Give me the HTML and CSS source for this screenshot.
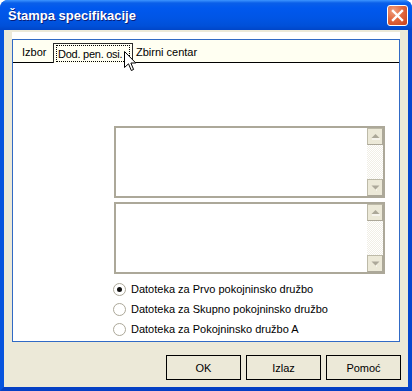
FILE: index.html
```html
<!DOCTYPE html>
<html>
<head>
<meta charset="utf-8">
<link rel="stylesheet" href="styles.css">
</head>
<body>
<div class="window">
  <div class="titlebar">
    <span class="title">Štampa specifikacije</span>
    <span class="close">
      <svg width="13" height="13" viewBox="0 0 13 13"><path d="M2 2 L11 11 M11 2 L2 11" stroke="#fff" stroke-width="2.4" stroke-linecap="square"/></svg>
    </span>
  </div>
  <div class="client">
    <div class="strip"></div>
    <div class="tabctl">
      <div class="tabstrip">
        <span class="tab first">Izbor</span>
        <span class="tab active"><span class="focus">Dod. pen. osi.</span></span>
        <span class="tab last">Zbirni centar</span>
      </div>
      <div class="tabbody">
        <div class="listbox">
          <div class="lb-area"></div>
          <div class="sb">
            <span class="sb-btn"><svg width="9" height="6" viewBox="0 0 9 6"><path d="M4.5 0 L8.5 4 L0.5 4 Z" fill="#ACA899"/><rect x="1" y="4.5" width="8" height="1" fill="#fff"/></svg></span>
            <span class="sb-track"></span>
            <span class="sb-btn"><svg width="9" height="6" viewBox="0 0 9 6"><path d="M0.5 0.5 L8.5 0.5 L4.5 4.5 Z" fill="#ACA899"/><rect x="5" y="4.5" width="1" height="1" fill="#fff"/></svg></span>
          </div>
        </div>
        <div class="listbox">
          <div class="lb-area"></div>
          <div class="sb">
            <span class="sb-btn"><svg width="9" height="6" viewBox="0 0 9 6"><path d="M4.5 0 L8.5 4 L0.5 4 Z" fill="#ACA899"/><rect x="1" y="4.5" width="8" height="1" fill="#fff"/></svg></span>
            <span class="sb-track"></span>
            <span class="sb-btn"><svg width="9" height="6" viewBox="0 0 9 6"><path d="M0.5 0.5 L8.5 0.5 L4.5 4.5 Z" fill="#ACA899"/><rect x="5" y="4.5" width="1" height="1" fill="#fff"/></svg></span>
          </div>
        </div>
        <div class="radios">
          <label class="radio"><span class="circle checked"></span>Datoteka za Prvo pokojninsko družbo</label>
          <label class="radio"><span class="circle"></span>Datoteka za Skupno pokojninsko družbo</label>
          <label class="radio"><span class="circle"></span>Datoteka za Pokojninsko družbo A</label>
        </div>
      </div>
    </div>
    <div class="buttons">
      <span class="btn">OK</span>
      <span class="btn">Izlaz</span>
      <span class="btn">Pomoć</span>
    </div>
  </div>
  <svg class="cursor" width="13" height="21" viewBox="0 0 13 21">
    <path d="M0.5 0.5 L0.5 16.5 L4.5 12.8 L7.3 19.5 L9.6 18.5 L6.9 12 L11.8 12 Z" fill="#fff" stroke="#000" stroke-width="1" stroke-linejoin="miter"/>
  </svg>
</div>
</body>
</html>
```
FILE: styles.css
```css
* { box-sizing: border-box; }
html, body { margin: 0; padding: 0; background: #ffffff; }
body {
  font-family: "Liberation Sans", Arial, sans-serif;
  font-size: 11px;
  color: #000;
}
.window {
  position: relative;
  width: 412px;
  height: 391px;
  display: flex;
  flex-direction: column;
  border-radius: 8px 8px 0 0;
  overflow: hidden;
  background: #0058e6;
}
.titlebar {
  height: 30px;
  flex: none;
  display: flex;
  align-items: center;
  justify-content: space-between;
  padding: 0 4px 0 8px;
  background: linear-gradient(to bottom, #3d95ff 0px, #0a5fe9 3px, #0058ee 8px, #0055e5 18px, #0050d8 26px, #0046c8 30px);
}
.title {
  color: #fff;
  font-family: "Liberation Sans", Arial, sans-serif;
  font-weight: bold;
  font-size: 13px;
  text-shadow: 1px 1px 0 #0a1e7a;
  padding-top: 1px;
}
.close {
  width: 21px;
  height: 21px;
  border: 1px solid #fff;
  border-radius: 3px;
  background: radial-gradient(circle at 30% 25%, #f0a080 0%, #e2693f 45%, #c7401a 100%);
  display: flex;
  align-items: center;
  justify-content: center;
  margin-top: 1px;
}
.client {
  flex: 1;
  background: #ece9d8;
  border-left: 4px solid #0754de;
  border-right: 4px solid #0546cf;
  border-bottom: 4px solid #0540c4;
  padding: 2px 7px 0 8px;
  display: flex;
  flex-direction: column;
}
.strip {
  width: 388px;
  height: 7px;
  background: #ffffff;
}
.tabctl {
  width: 388px;
  height: 303px;
  border: 1px solid #316ac5;
  display: flex;
  flex-direction: column;
  background: #ffffff;
}
.tabstrip {
  height: 23px;
  flex: none;
  background: #fffff2;
  border-bottom: 1px solid #000;
  display: flex;
  align-items: flex-end;
}
.tab {
  height: 20px;
  display: flex;
  align-items: center;
  color: #000;
  white-space: nowrap;
}
.tab.first { width: 40px; padding-left: 9px; }
.tab.active {
  width: 80px;
  border: 1px solid #2a2a2a;
  border-bottom: none;
  margin-bottom: -1px;
  height: 20px;
  background: #fffff2;
  padding: 1px 2px 1px 2px;
  align-items: stretch;
}
.focus {
  flex: 1;
  border: 1px dotted #000;
  display: flex;
  align-items: center;
  padding-left: 1px;
  letter-spacing: -0.25px;
}
.tab.last { padding-left: 3px; }
.tabbody {
  flex: 1;
  padding: 63px 0 0 101px;
  display: flex;
  flex-direction: column;
  gap: 4px;
}
.listbox {
  width: 271px;
  height: 72px;
  border: 2px solid #aca899;
  display: flex;
  background: #fff;
}
.lb-area { flex: 1; }
.sb {
  width: 16px;
  display: flex;
  flex-direction: column;
}
.sb-btn {
  height: 17px;
  flex: none;
  background: #ece9d8;
  border: 1px solid #bdbaa8;
  border-right-color: #aca899;
  border-bottom-color: #aca899;
  display: flex;
  align-items: center;
  justify-content: center;
}
.sb-track {
  flex: 1;
  background-color: #fbfbf8;
  background-image: repeating-conic-gradient(#f1efe6 0% 25%, #ffffff 0% 50%);
  background-size: 2px 2px;
}
.radios {
  margin-top: 1px;
  display: flex;
  flex-direction: column;
}
.radio {
  height: 20px;
  display: flex;
  align-items: center;
  gap: 5px;
  margin-left: -1px;
  white-space: nowrap;
}
.circle {
  width: 13px;
  height: 13px;
  border-radius: 50%;
  border: 1px solid #aca899;
  background: #fff;
  display: flex;
  align-items: center;
  justify-content: center;
}
.circle.checked::after {
  content: "";
  width: 5px;
  height: 5px;
  border-radius: 50%;
  background: #111;
}
.buttons {
  margin-top: 13px;
  display: flex;
  justify-content: flex-end;
  gap: 5px;
}
.btn {
  width: 75px;
  height: 25px;
  border: 1px solid #000;
  background: #ece9d8;
  display: flex;
  align-items: center;
  justify-content: center;
  color: #000;
}
.cursor {
  position: absolute;
  left: 124px;
  top: 51px;
}
```
